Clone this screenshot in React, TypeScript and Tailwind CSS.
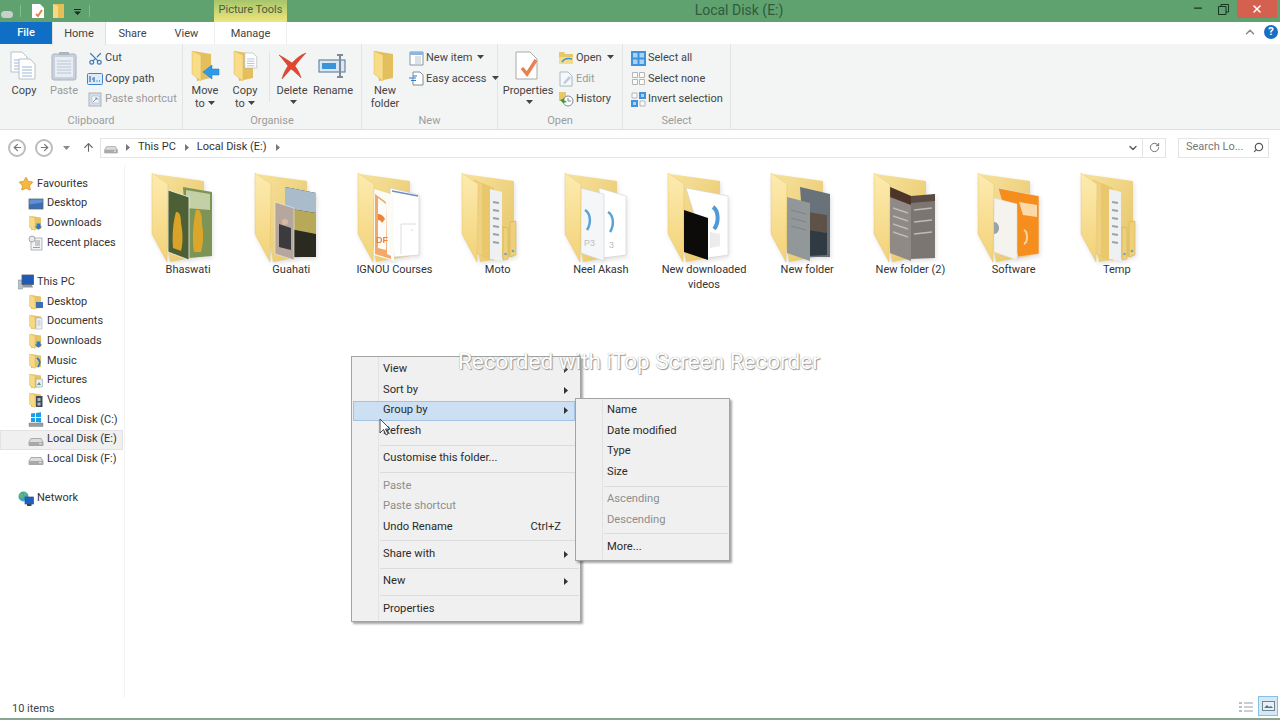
import type { ReactNode } from "react";
import { Scissors, ChevronDown, ChevronUp, RotateCw, ArrowUp, ArrowLeft, ArrowRight, Search, Minus, X, Star } from "lucide-react";

const FONT = "font-['Roboto','Noto_Sans',sans-serif]";

// small triangle next to dropdown labels
const Caret = () => (
  <svg width="7" height="4" viewBox="0 0 7 4" className="inline-block ml-[3px] mb-[2px]">
    <path d="M0 0h7L3.5 4z" fill="#444" />
  </svg>
);

const MiniFolder = ({ children }: { children?: ReactNode }) => (
  <svg width="16" height="16" viewBox="0 0 16 16" className="shrink-0">
    <path d="M3 1 L13 2.5 V14 L3 15z" fill="#e5c36a" />
    <path d="M1.5 1 L7 3 V15.5 L1.5 12.5z" fill="#f6d982" stroke="#d9b65c" strokeWidth="0.4" />
    {children}
  </svg>
);

const Drive = () => (
  <svg width="16" height="16" viewBox="0 0 16 16" className="shrink-0">
    <path d="M3 6.5h10l2 3.5v3.5H1V10z" fill="#dcdcdc" stroke="#8f8f8f" strokeWidth="0.7" />
    <path d="M1 10h14v3.5H1z" fill="#a9a9a9" />
    <rect x="11" y="11" width="2.5" height="1.2" fill="#e8e8e8" />
  </svg>
);

const WinDrive = () => (
  <svg width="16" height="16" viewBox="0 0 16 16" className="shrink-0">
    <path d="M1 11h14v3.5H1z" fill="#9d9d9d" stroke="#7d8b96" strokeWidth="0.5" />
    <path d="M3 1.6l4-.6v4H3zM8 .9l5-.7V5H8zM3 6h4v4H3zM8 6h5v4.4L8 10z" fill="#1b9ee8" />
  </svg>
);

const Monitor = () => (
  <svg width="16" height="16" viewBox="0 0 16 16" className="shrink-0">
    <rect x="1" y="3" width="14" height="10" fill="#3c6db5" stroke="#5a6672" strokeWidth="0.8" />
    <path d="M1.5 3.5h13v3l-13 2z" fill="#5d90d6" />
  </svg>
);

const RecentDoc = () => (
  <svg width="16" height="16" viewBox="0 0 16 16" className="shrink-0">
    <path d="M3 3h11v12H3z" fill="#f3f3f3" stroke="#8f9aa3" strokeWidth="0.7" />
    <path d="M7 6h5M7 8h5M7 10h5M5 12.5h7" stroke="#7f8a94" strokeWidth="0.8" />
    <circle cx="4" cy="4" r="3" fill="#e9e9e9" stroke="#7f8a94" strokeWidth="0.7" />
  </svg>
);

const ThisPcIcon = () => (
  <svg width="16" height="16" viewBox="0 0 16 16" className="shrink-0">
    <rect x="0.5" y="6" width="4" height="9" fill="#b8c2cb" stroke="#7b8791" strokeWidth="0.5" />
    <rect x="4" y="1" width="11.5" height="9.5" fill="#1e5bb8" stroke="#4c5a66" strokeWidth="0.8" />
    <path d="M5 11h9l1 2.5H5z" fill="#8c99a5" />
  </svg>
);

const NetworkIcon = () => (
  <svg width="16" height="16" viewBox="0 0 16 16" className="shrink-0">
    <circle cx="5.5" cy="5.5" r="5" fill="#3aa6c9" />
    <path d="M2 3c2-1 3 0 3 2s-2 2-3 1zM6 1.500c2 0 3 2 2 3S6 4 6 1.500z" fill="#6dbb55" />
    <rect x="7" y="6" width="8.5" height="7" fill="#1d5fc4" stroke="#47545f" strokeWidth="0.7" />
    <rect x="9" y="13" width="4.5" height="2" fill="#3a4550" />
  </svg>
);

type NavItem = { label: string; icon: ReactNode; head?: boolean; active?: boolean };

const down = <path d="M8 9h4v3h2l-4 3.500L6 12h2z" transform="translate(1 0) scale(0.95)" fill="#2a78c9" />;

const navGroups: NavItem[][] = [
  [
    { label: "Favourites", head: true, icon: <Star size={16} className="shrink-0" fill="#f5b942" stroke="#d8912c" strokeWidth={1.2} /> },
    { label: "Desktop", icon: <Monitor /> },
    { label: "Downloads", icon: <MiniFolder>{down}</MiniFolder> },
    { label: "Recent places", icon: <RecentDoc /> },
  ],
  [
    { label: "This PC", head: true, icon: <ThisPcIcon /> },
    { label: "Desktop", icon: <MiniFolder><rect x="8" y="8" width="7" height="6" fill="#3c6db5" /></MiniFolder> },
    { label: "Documents", icon: <MiniFolder><path d="M8 4h6v11H8z" fill="#eef0f2" stroke="#9aa5ad" strokeWidth="0.5" /><path d="M9.500 7h3M9.500 9h3M9.500 11h3" stroke="#98a3ab" strokeWidth="0.6" /></MiniFolder> },
    { label: "Downloads", icon: <MiniFolder>{down}</MiniFolder> },
    { label: "Music", icon: <MiniFolder><path d="M9 5c3 2 4 5 1 9" fill="none" stroke="#2a78c9" strokeWidth="1.8" /></MiniFolder> },
    { label: "Pictures", icon: <MiniFolder><rect x="8" y="6" width="6.5" height="8" fill="#e8edef" stroke="#8d979e" strokeWidth="0.5" /><path d="M9 12l2-3 2 3z" fill="#5f9a78" /></MiniFolder> },
    { label: "Videos", icon: <MiniFolder><rect x="8" y="4" width="6.5" height="11" fill="#3f4a54" /><path d="M9.500 6h3v3h-3zM9.500 10.500h3v3h-3z" fill="#a9b8c4" /></MiniFolder> },
    { label: "Local Disk (C:)", icon: <WinDrive /> },
    { label: "Local Disk (E:)", icon: <Drive />, active: true },
    { label: "Local Disk (F:)", icon: <Drive /> },
  ],
  [{ label: "Network", head: true, icon: <NetworkIcon /> }],
];

const Sidebar = () => (
  <aside className="w-[125px] shrink-0 border-r border-[#f3f3f3] pt-[9px] pb-[20px] flex flex-col gap-[19.6px] text-[#333]">
    {navGroups.map((group, i) => (
      <div key={i} className="flex flex-col">
        {group.map((item) => (
          <div
            key={item.label + item.head}
            className={
              "h-[19.7px] flex items-center gap-[3px] w-[123px] whitespace-nowrap border " +
              (item.head ? "pl-[17px] " : "pl-[27px] ") +
              (item.active ? "bg-[#f0f0f0] border-[#e2e2e2]" : "border-transparent")
            }
          >
            {item.icon}
            <span className="text-[11px]">{item.label}</span>
          </div>
        ))}
      </div>
    ))}
  </aside>
);

// ---- ribbon ----

const BigAction = ({ label, second, icon, w, disabled, caretOnly, noCaret }: { label: string; second?: string; icon: ReactNode; w: string; disabled?: boolean; caretOnly?: boolean; noCaret?: boolean }) => (
  <div className={"flex flex-col items-center pt-[5px] shrink-0 " + w + (disabled ? " text-[#9b9b9b]" : " text-[#444]")}>
    <div className="h-[33px] flex items-center justify-center">{icon}</div>
    <div className="text-[11px] leading-[13px] mt-[1.5px] whitespace-nowrap">{label}</div>
    {second && <div className="text-[11px] leading-[13px]">{second}{!noCaret && <Caret />}</div>}
    {caretOnly && <div className="leading-[12px] h-[12px]"><Caret /></div>}
  </div>
);

const SmallAction = ({ label, icon, caret, disabled }: { label: string; icon: ReactNode; caret?: boolean; disabled?: boolean }) => (
  <div className={"h-[20.5px] flex items-center gap-[2px] whitespace-nowrap text-[11px] " + (disabled ? "text-[#9b9b9b]" : "text-[#444]")}>
    <div className="w-[16px] h-[16px] flex items-center justify-center shrink-0">{icon}</div>
    <span>{label}</span>
    {caret && <Caret />}
  </div>
);

const Group = ({ label, w, className, children }: { label: string; w: string; className?: string; children: ReactNode }) => (
  <section className={"h-full flex flex-col shrink-0 border-r border-[#e3e5e5] " + w}>
    <div className={"flex-1 flex " + (className ?? "")}>{children}</div>
    <div className="h-[17px] text-center text-[11px] leading-[18px] text-[#9c9c9c]">{label}</div>
  </section>
);

const BigFolder = ({ children }: { children?: ReactNode }) => (
  <svg width="32" height="32" viewBox="0 0 32 32">
    <path d="M6 1l18 3v24L10 31z" fill="#e4bf5e" />
    <path d="M5 1l9 4v26L5 24z" fill="#f8dc87" stroke="#dcb95e" strokeWidth="0.5" />
    {children}
  </svg>
);

const Page = ({ x = 0, y = 0 }: { x?: number; y?: number }) => (
  <g transform={"translate(" + x + " " + y + ")"}>
    <path d="M0 0h11l5 5v15H0z" fill="#fff" stroke="#a9b2ba" strokeWidth="0.8" />
    <path d="M3 8h10M3 11h10M3 14h10M3 17h10" stroke="#8fb0d4" strokeWidth="0.9" />
  </g>
);

const Ribbon = () => (
  <div className="h-[86px] shrink-0 bg-[#f3f5f5] border-b border-[#e0e0e0] flex">
    <Group label="Clipboard" w="w-[183px]" className="pl-[4px]">
      <BigAction label="Copy" w="w-[40px]" icon={
        <svg width="28" height="30" viewBox="0 0 28 30"><Page x={1} y={1} /><Page x={9} y={8} /></svg>
      } />
      <BigAction label="Paste" w="w-[40px]" disabled icon={
        <svg width="26" height="30" viewBox="0 0 26 30">
          <rect x="1" y="3" width="24" height="26" rx="2" fill="#c8d2de" stroke="#a9b3bd" />
          <rect x="4" y="6" width="18" height="20" fill="#e9edf2" />
          <path d="M6 10h14M6 13h14M6 16h14M6 19h14M6 22h14" stroke="#a9bbd0" strokeWidth="0.8" />
          <rect x="8" y="1" width="10" height="3" fill="#aeb6be" />
        </svg>
      } />
      <div className="ml-[3px] pt-[4px]">
        <SmallAction label="Cut" icon={<Scissors size={15} color="#3f7fb8" className="-rotate-90" />} />
        <SmallAction label="Copy path" icon={
          <svg width="16" height="12" viewBox="0 0 16 12"><rect x="0.5" y="0.5" width="15" height="11" rx="1" fill="#dcebf9" stroke="#3d86cf" /><path d="M3 3v6M5 6h1M7 4v5M9.500 8h1M12 8h1" stroke="#24507c" strokeWidth="1" /></svg>
        } />
        <SmallAction label="Paste shortcut" disabled icon={
          <svg width="14" height="16" viewBox="0 0 14 16"><rect x="1" y="2" width="12" height="13" fill="#d9dfe6" stroke="#a9b3bd" /><rect x="4" y="5" width="7" height="7" fill="#f4f6f8" stroke="#9fb0c2" strokeWidth="0.5" /><path d="M5 11l4-4M7 7h2v2" stroke="#6f8fb0" strokeWidth="0.9" fill="none" /></svg>
        } />
      </div>
    </Group>
    <Group label="Organise" w="w-[179px]" className="pl-[1px]">
      <BigAction label="Move" second="to" w="w-[42px]" icon={
        <svg width="32" height="32" viewBox="0 0 32 32">
          <path d="M4 1l18 3v24L8 31z" fill="#e4bf5e" />
          <path d="M3 1l9 4v26L3 24z" fill="#f8dc87" stroke="#dcb95e" strokeWidth="0.5" />
          <path d="M30 19h-7v-4l-9 7 9 7v-4h7z" fill="#2f9be8" stroke="#1c74bd" strokeWidth="0.5" />
        </svg>
      } />
      <BigAction label="Copy" second="to" w="w-[38px]" icon={
        <BigFolder><g transform="scale(0.75)"><Page x={21} y={4} /></g></BigFolder>
      } />
      <div className="ml-[5px] mr-[2px] mt-[8px] w-px h-[50px] bg-[#e3e5e5]" />
      <BigAction label="Delete" w="w-[40px]" caretOnly icon={
        <svg width="30" height="28" viewBox="0 0 30 28"><path d="M2 3c6 3 10 6 13 8 4-4 8-8 14-10-4 4-8 9-11 13 3 4 5 8 6 12-3-3-7-7-10-9-3 3-6 7-9 10 1-5 4-10 6-13C8 10 5 6 2 3z" fill="#e2462f" stroke="#b93a28" strokeWidth="0.5" /></svg>
      } />
      <BigAction label="Rename" w="w-[42px]" icon={
        <svg width="30" height="26" viewBox="0 0 30 26"><rect x="1" y="7" width="26" height="12" fill="#dbe8f3" stroke="#50738f" /><rect x="4" y="10" width="14" height="6" fill="#3d93d8" /><path d="M19 2h6M22 2v22M19 24h6" stroke="#7d8b96" strokeWidth="2" /></svg>
      } />
    </Group>
    <Group label="New" w="w-[136px]" className="pl-[3px]">
      <BigAction label="New" second="folder" noCaret w="w-[40px]" icon={<BigFolder />} />
      <div className="ml-[3px] pt-[4px]">
        <SmallAction label="New item" caret icon={
          <svg width="15" height="15" viewBox="0 0 15 15"><path d="M1 1h13v13H1z" fill="#fff" stroke="#8196a8" /><path d="M1 1h13v3H1z" fill="#8fb6da" /><path d="M6 6h6M6 8h6M6 10h6M6 12h6" stroke="#9aa9b5" strokeWidth="0.7" /></svg>
        } />
        <SmallAction label="Easy access" caret icon={
          <svg width="15" height="15" viewBox="0 0 15 15"><path d="M4 1h7l3 3v10H4z" fill="#fff" stroke="#7f8f9c" /><path d="M0 7h7M2 9.500h5M4 5h4" stroke="#2f7cc4" strokeWidth="1" /></svg>
        } />
      </div>
    </Group>
    <Group label="Open" w="w-[125px]" className="pl-[2px]">
      <BigAction label="Properties" w="w-[56px]" caretOnly icon={
        <svg width="26" height="30" viewBox="0 0 26 30"><path d="M1 1h14l7 7v20H1z" fill="#fff" stroke="#a9a9a9" /><path d="M7 17l5 6 9-14" fill="none" stroke="#e8814f" strokeWidth="3.5" /></svg>
      } />
      <div className="ml-[2px] pt-[4px]">
        <SmallAction label="Open" caret icon={
          <svg width="16" height="14" viewBox="0 0 16 14"><path d="M1 1h5l1 2h8v10H1z" fill="#e9c767" /><path d="M1 6h14v7H1z" fill="#f6dc89" /><path d="M4 11c2-3 6-4 10-3" stroke="#3b94d6" strokeWidth="1.6" fill="none" /></svg>
        } />
        <SmallAction label="Edit" disabled icon={
          <svg width="14" height="16" viewBox="0 0 14 16"><path d="M1 1h8l4 4v10H1z" fill="#f6f8fa" stroke="#a9b8c6" /><path d="M4 12l6-7 2 2-6 6z" fill="#b8cde0" /></svg>
        } />
        <SmallAction label="History" icon={
          <svg width="16" height="16" viewBox="0 0 16 16"><path d="M1 1h7v9H1z" fill="#eac768" /><circle cx="10" cy="10" r="5" fill="#fff" stroke="#7d8b96" /><path d="M10 7v3h3" stroke="#7d8b96" fill="none" /><path d="M2 9l3 3 4-1-3-2 1-2z" fill="#3f9a3f" /></svg>
        } />
      </div>
    </Group>
    <Group label="Select" w="w-[108px]" className="pl-[7px]">
      <div className="pt-[4px]">
        <SmallAction label="Select all" icon={
          <svg width="15" height="15" viewBox="0 0 15 15"><path d="M0 0h15v15H0z" fill="#3f93de" /><path d="M2 2h4.500v4.500H2zM8.500 2H13v4.500H8.500zM2 8.500h4.500V13H2zM8.500 8.500H13V13H8.500z" fill="#a9d2f3" /></svg>
        } />
        <SmallAction label="Select none" icon={
          <svg width="15" height="15" viewBox="0 0 15 15"><path d="M1.500 1.500h5v5h-5zM8.500 1.500h5v5h-5zM1.500 8.500h5v5h-5zM8.500 8.500h5v5h-5z" fill="#fafafa" stroke="#b5b5b5" /></svg>
        } />
        <SmallAction label="Invert selection" icon={
          <svg width="15" height="15" viewBox="0 0 15 15"><path d="M8 0h7v7H8zM0 8h7v7H0z" fill="#3f93de" /><path d="M10 2h3v3h-3zM2 10h3v3H2z" fill="#a9d2f3" /><path d="M1 1h5v5H1zM9 9h5v5H9z" fill="#fafafa" stroke="#b5b5b5" /></svg>
        } />
      </div>
    </Group>
  </div>
);

// ---- folders ----

const Folder = ({ children }: { children?: ReactNode }) => (
  <svg width="76" height="92" viewBox="0 0 76 92" className="block drop-shadow-[1px_2px_2px_rgba(0,0,0,0.12)]">
    <defs>
      <linearGradient id="folderFront" x1="0" y1="0" x2="0" y2="1">
        <stop offset="0" stopColor="#fcebb0" />
        <stop offset="1" stopColor="#f3d277" />
      </linearGradient>
      <linearGradient id="folderBack" x1="0" y1="0" x2="1" y2="1">
        <stop offset="0" stopColor="#f7e29c" />
        <stop offset="1" stopColor="#e6c467" />
      </linearGradient>
    </defs>
    <polygon points="4,2 54,9 54,84 20,90" fill="url(#folderBack)" />
    {children}
    <polygon points="2,1 18,12 17,90 2,62" fill="url(#folderFront)" stroke="#e3bf62" strokeWidth="0.4" />
  </svg>
);

const Docs = () => (
  <>
    <polygon points="14,8 30,15 30,88 14,80" fill="#f0d182" stroke="#d9b65c" strokeWidth="0.4" />
    <polygon points="22,11 34,16 34,89 22,85" fill="#e9c76c" />
    <polygon points="30,17 42,20 42,89 30,87" fill="#eef0f1" />
    <path d="M33 30l6 1M33 38l6 1M33 46l6 1M33 54l6 1M33 62l6 1M33 70l6 1" stroke="#9aa3ab" strokeWidth="2" />
    <polygon points="43,55 48,56 48,87 43,88" fill="#efd07a" stroke="#c9a850" strokeWidth="0.5" />
    <polygon points="50,50 56,49 56,83 50,85" fill="#efd07a" stroke="#c9a850" strokeWidth="0.5" />
    <circle cx="45.5" cy="82" r="1.3" fill="#6aa5c6" />
    <circle cx="53" cy="79" r="1.3" fill="#6aa5c6" />
  </>
);

const folders: { name: string; art: ReactNode }[] = [
  {
    name: "Bhaswati",
    art: (
      <>
        <polygon points="33,15 62,20 62,84 38,86" fill="#7c9456" />
        <path d="M36 18l24 4v16l-24-2z" fill="#c3d0a6" />
        <path d="M46 38c5-2 6 6 6 14 2 10 1 22-1 28h-7c-2-12-1-30 2-42z" fill="#dca62a" />
        <polygon points="18,18 39,25 39,88 18,80" fill="#4d5f35" stroke="#f3f3f3" strokeWidth="0.8" />
        <path d="M26 40c4-1 5 5 5 11 2 10 2 20 0 28l-8-3c-1-12 0-26 3-36z" fill="#d9a32a" />
      </>
    ),
  },
  {
    name: "Guahati",
    art: (
      <>
        <polygon points="32,15 63,21 63,85 38,85" fill="#2a2a20" />
        <polygon points="32,15 63,21 63,41 32,36" fill="#a8bccc" />
        <polygon points="32,36 63,41 63,62 32,56" fill="#b8a85a" />
        <polygon points="22,30 41,36 41,88 22,82" fill="#b5a79e" stroke="#eee" strokeWidth="0.6" />
        <path d="M26 52l12 4v22l-12-3z" fill="#3b3a3e" />
        <circle cx="32" cy="50" r="3" fill="#d8b8a0" />
      </>
    ),
  },
  {
    name: "IGNOU Courses",
    art: (
      <>
        <polygon points="34,16 63,23 63,83 38,85" fill="#fff" stroke="#cfcfcf" strokeWidth="0.6" />
        <path d="M36 19l26 5" stroke="#6b8fc6" strokeWidth="1.5" />
        <path d="M45 52h15M45 52v30M55 58l2 0" stroke="#c8c8c8" strokeWidth="0.6" />
        <polygon points="18,17 38,23 38,89 18,83" fill="#fbfbf8" />
        <path d="M19 22l11 8 1 52 4 2v3l-16-5z" fill="#f2a868" />
        <path d="M22 26l8 6v46l-8-2z" fill="#fbfbf8" />
        <path d="M22 42c3 0 6 2 7 5l-3 4c-1-2-2-3-4-3z" fill="#e9843a" />
        <text x="20" y="71" fontSize="9" fontWeight="700" fill="#e9843a" fontFamily="Liberation Sans, sans-serif">DF</text>
      </>
    ),
  },
  { name: "Moto", art: <Docs /> },
  {
    name: "Neel Akash",
    art: (
      <>
        <polygon points="36,16 63,24 63,83 40,86" fill="#fff" stroke="#d0d0d0" strokeWidth="0.6" />
        <path d="M45 40c5 3 7 12 2 20" fill="none" stroke="#5ba3d6" strokeWidth="2.5" />
        <text x="46" y="76" fontSize="9" fill="#bbb" fontFamily="Liberation Sans, sans-serif">3</text>
        <polygon points="18,16 41,22 41,89 18,81" fill="#f5f6f7" stroke="#d0d0d0" strokeWidth="0.6" />
        <path d="M22 38c5 3 7 12 2 20" fill="none" stroke="#5ba3d6" strokeWidth="2.5" />
        <text x="21" y="74" fontSize="9" fill="#bbb" fontFamily="Liberation Sans, sans-serif">P3</text>
      </>
    ),
  },
  {
    name: "New downloaded videos",
    art: (
      <>
        <polygon points="20,16 62,24 62,83 42,86" fill="#fff" stroke="#d0d0d0" strokeWidth="0.6" />
        <path d="M47 35c6 4 6 16 1 22" fill="none" stroke="#4f9ad6" strokeWidth="4" />
        <path d="M44 60l10 2v12l-10 2z" fill="#ececec" />
        <polygon points="18,38 42,46 42,88 18,80" fill="#0d0b09" />
      </>
    ),
  },
  {
    name: "New folder",
    art: (
      <>
        <polygon points="31,15 61,22 61,85 36,85" fill="#69727a" />
        <path d="M38 40l20 3v18l-20-2z" fill="#5d5148" />
        <path d="M38 58l20 3v22l-20 1z" fill="#2f3a42" />
        <polygon points="18,25 41,31 41,89 18,81" fill="#92979a" />
        <path d="M22 38l15 4M22 46l15 4M22 54l15 4" stroke="#7c8285" strokeWidth="1" />
      </>
    ),
  },
  {
    name: "New folder (2)",
    art: (
      <>
        <polygon points="37,30 63,22 63,86 38,87" fill="#7c7672" />
        <polygon points="18,15 39,24 39,89 18,81" fill="#8f8a86" />
        <polygon points="18,15 39,24 39,33 18,25" fill="#4d3428" />
        <polygon points="39,24 63,22 63,29 39,31" fill="#5b4a42" />
        <path d="M21 36l15 5M21 44l15 5M21 52l15 5M21 60l15 5M42 38l18-2M42 50l18-2M42 62l18-2" stroke="#bfbab4" strokeWidth="1.4" />
      </>
    ),
  },
  {
    name: "Software",
    art: (
      <>
        <polygon points="22,16 63,24 63,82 42,85" fill="#f68e1e" stroke="#e9e9e9" strokeWidth="0.6" />
        <path d="M43 30l18 3 0 12-14-2z" fill="#fbd9a8" />
        <path d="M48 58c4 2 4 12 0 14" fill="none" stroke="#f6d3a0" strokeWidth="2" />
        <polygon points="18,26 41,32 41,88 18,80" fill="#f4f3ee" stroke="#d8d8d8" strokeWidth="0.5" />
        <path d="M18 50c3 0 5 3 5 6s-2 6-5 6z" fill="#9aa3a6" />
      </>
    ),
  },
  { name: "Temp", art: <Docs /> },
];

// ---- context menu ----

type MenuRow = { label?: string; arrow?: boolean; disabled?: boolean; hot?: boolean; shortcut?: string; sep?: boolean };

const mainMenu: MenuRow[] = [
  { label: "View", arrow: true },
  { label: "Sort by", arrow: true },
  { label: "Group by", arrow: true, hot: true },
  { label: "Refresh" },
  { sep: true },
  { label: "Customise this folder..." },
  { sep: true },
  { label: "Paste", disabled: true },
  { label: "Paste shortcut", disabled: true },
  { label: "Undo Rename", shortcut: "Ctrl+Z" },
  { sep: true },
  { label: "Share with", arrow: true },
  { sep: true },
  { label: "New", arrow: true },
  { sep: true },
  { label: "Properties" },
];

const subMenu: MenuRow[] = [
  { label: "Name" },
  { label: "Date modified" },
  { label: "Type" },
  { label: "Size" },
  { sep: true },
  { label: "Ascending", disabled: true },
  { label: "Descending", disabled: true },
  { sep: true },
  { label: "More..." },
];

const Menu = ({ rows, className }: { rows: MenuRow[]; className: string }) => (
  <div className={"absolute bg-[#f0f0f0] border border-[#a3a3a3] shadow-[2px_2px_2px_rgba(0,0,0,0.35)] px-[1px] text-[11.2px] " + className}>
    <div className="absolute top-0 bottom-0 left-[26px] w-px bg-[#e2e2e2]" />
    {rows.map((row, i) =>
      row.sep ? (
        <div key={i} className="h-[6.7px] flex items-center">
          <div className="h-px bg-[#dcdcdc] w-full ml-[27px]" />
        </div>
      ) : (
        <div
          key={i}
          className={
            "relative h-[20.6px] flex items-center justify-between border whitespace-nowrap " +
            (row.hot ? "bg-[#cde0f3] border-[#a4c3e2] w-[222px] " : "border-transparent ") +
            (row.disabled ? "text-[#8e8e8e]" : "text-[#2b2b2b]")
          }
        >
          <span className="pl-[29px]">{row.label}</span>
          {row.shortcut && <span className="pr-[17px]">{row.shortcut}</span>}
          {row.arrow && (
            <svg width="4" height="7" viewBox="0 0 4 7" className={row.hot ? "mr-[6px]" : "mr-[10px]"}>
              <path d="M0 0l4 3.500L0 7z" fill="#333" />
            </svg>
          )}
        </div>
      )
    )}
  </div>
);

export default function App() {
  return (
    <div className={"relative w-[1280px] h-[720px] overflow-hidden bg-white flex flex-col text-[#333] " + FONT}>
      {/* title bar */}
      <header className="h-[22px] shrink-0 bg-[#5fa270] flex items-stretch relative">
        <div className="w-[214px] flex items-center shrink-0">
          <div className="ml-[1px] w-[12px] h-[7px] mt-[6px] rounded-sm bg-[#c9cfcb]" />
          <div className="ml-[7px] w-px h-[12px] bg-[#86b893]" />
          <svg width="14" height="15" viewBox="0 0 14 15" className="ml-[10px]"><path d="M1 0h8l4 4v10H1z" fill="#fff" /><path d="M5 10l2 2 4-6" stroke="#e8814f" strokeWidth="2" fill="none" /></svg>
          <svg width="13" height="14" viewBox="0 0 13 14" className="ml-[7px]"><path d="M1 0h11v14H1z" fill="#e5bf58" /><path d="M1 0l5 2v12H1z" fill="#f6d982" /></svg>
          <svg width="7" height="6" viewBox="0 0 7 6" className="ml-[9px] mt-[2px]"><path d="M0 0h7v1H0zM0 2.500h7L3.500 6z" fill="#1b2b20" /></svg>
          <div className="ml-[8px] w-px h-[12px] bg-[#86b893]" />
        </div>
        <div className="w-[73px] shrink-0 bg-gradient-to-b from-[#a6c56c] to-[#eee77c] text-center text-[11px] leading-[19px] text-[#4f5a45]">Picture Tools</div>
        <div className="flex-1 text-center pr-[89px] text-[14px] leading-[21px] text-[#2f5b3c] whitespace-nowrap">Local Disk (E:)</div>
        <div className="absolute right-[3px] top-0 h-[18px] w-[40px] bg-[#d4604f] flex items-center justify-center">
          <X size={12} color="#fff" strokeWidth={3} />
        </div>
        <div className="absolute left-[1192px] top-[2px]"><Minus size={12} color="#16351f" strokeWidth={2.5} /></div>
        <svg width="11" height="11" viewBox="0 0 11 11" className="absolute left-[1218px] top-[4px]">
          <path d="M3 2.500V.5h7.500V8H8M.5 2.500H8V10.500H.5z" fill="none" stroke="#16351f" />
        </svg>
      </header>

      {/* tab strip */}
      <nav className="h-[22px] shrink-0 bg-white flex text-[11px] text-[#444] relative">
        <div className="w-[52px] bg-[#0f6fc6] text-white text-center leading-[22px] font-medium">File</div>
        <div className="w-[54px] h-[23px] border-x border-[#e0e0e0] bg-[#f3f5f5] text-center leading-[23px] z-10">Home</div>
        <div className="w-[53px] text-center leading-[23px]">Share</div>
        <div className="w-[55px] text-center leading-[23px]">View</div>
        <div className="w-[73px] border-x border-[#eeeeee] text-center leading-[23px]">Manage</div>
        <ChevronUp size={14} color="#8a8a8a" strokeWidth={2.5} className="absolute left-[1243px] top-[3px]" />
        <div className="absolute left-[1264px] top-[3px] w-[14px] h-[14px] rounded-full bg-[#1a6fc4] text-white text-[11px] font-bold leading-[14px] text-center">?</div>
      </nav>

      <Ribbon />

      {/* address row */}
      <div className="h-[35px] shrink-0 flex items-center text-[11px] text-[#333] relative">
        <div className="w-[18px] h-[18px] ml-[8px] rounded-full border-2 border-[#bdbdbd] flex items-center justify-center"><ArrowLeft size={11} color="#777" strokeWidth={2.5} /></div>
        <div className="w-[18px] h-[18px] ml-[9px] rounded-full border-2 border-[#bdbdbd] flex items-center justify-center"><ArrowRight size={11} color="#777" strokeWidth={2.5} /></div>
        <svg width="7" height="4" viewBox="0 0 7 4" className="ml-[10px]"><path d="M0 0h7L3.500 4z" fill="#8a8a8a" /></svg>
        <ArrowUp size={13} color="#666" strokeWidth={2} className="ml-[12px]" />
        <div className="ml-[5px] h-[20px] w-[1066px] border border-[#e4e4e4] flex items-center">
          <div className="ml-[2px] scale-90"><Drive /></div>
          <svg width="4" height="7" viewBox="0 0 4 7" className="ml-[7px]"><path d="M0 0l4 3.500L0 7z" fill="#777" /></svg>
          <span className="ml-[8px]">This PC</span>
          <svg width="4" height="7" viewBox="0 0 4 7" className="ml-[9px]"><path d="M0 0l4 3.500L0 7z" fill="#777" /></svg>
          <span className="ml-[8px]">Local Disk (E:)</span>
          <svg width="4" height="7" viewBox="0 0 4 7" className="ml-[9px]"><path d="M0 0l4 3.500L0 7z" fill="#777" /></svg>
          <ChevronDown size={12} color="#555" strokeWidth={2.5} className="ml-auto mr-[3px]" />
          <div className="w-[23px] h-full border-l border-[#e4e4e4] flex items-center justify-center"><RotateCw size={11} color="#666" strokeWidth={2} /></div>
        </div>
        <div className="ml-[12px] h-[20px] w-[91px] border border-[#e4e4e4] flex items-center pl-[7px] text-[#777]">
          <span>Search Lo...</span>
          <Search size={11} color="#555" strokeWidth={2.5} className="ml-auto mr-[4px] -scale-x-100" />
        </div>
      </div>

      {/* main */}
      <main className="flex-1 flex min-h-0">
        <Sidebar />
        <div className="flex-1 pl-[11.5px] pt-[7px]">
          <div className="grid grid-cols-[repeat(10,103.2px)]">
            {folders.map((f) => (
              <div key={f.name} className="flex flex-col items-center">
                <Folder>{f.art}</Folder>
                <div className="text-[11px] leading-[15px] text-center text-[#333] w-[90px] -mt-[2px]">{f.name}</div>
              </div>
            ))}
          </div>
        </div>
      </main>

      {/* status bar */}
      <footer className="h-[20px] shrink-0 flex items-center pl-[12px] pt-[2px] text-[11px] text-[#444] relative">
        10 items
        <svg width="16" height="12" viewBox="0 0 16 12" className="absolute left-[1238px] top-[3px]">
          <path d="M1 1h3v2H1zM1 5h3v2H1zM1 9h3v2H1z" fill="#b7c0c7" />
          <path d="M6 2h9M6 6h9M6 10h9" stroke="#b7c0c7" strokeWidth="1.5" />
        </svg>
        <div className="absolute left-[1258px] -top-[2px] w-[20px] h-[20px] bg-[#d4e8f7] border border-[#88bfe6] flex items-center justify-center">
          <svg width="13" height="10" viewBox="0 0 13 10"><rect x="0.5" y="0.5" width="12" height="9" fill="#e8f0f5" stroke="#6f8391" /><path d="M2 7l3-3 2 2 2-1 2 2z" fill="#54768c" /></svg>
        </div>
      </footer>
      <div className="h-[2px] shrink-0 bg-[#8aa592]" />

      {/* right click menu */}
      <Menu rows={mainMenu} className="left-[351px] top-[356px] w-[230px] h-[266px] pt-[2.4px]" />
      <Menu rows={subMenu} className="left-[575px] top-[398px] w-[155px] h-[163px] pt-[1.4px]" />

      {/* recorder watermark */}
      <div className="absolute left-[458px] top-[347px] text-[22.5px] leading-[28px] text-white whitespace-nowrap font-['Roboto',sans-serif] [text-shadow:0_0_1px_#888,1px_1px_1px_#999]">
        Recorded with iTop Screen Recorder
      </div>

      {/* mouse pointer */}
      <svg width="12" height="18" viewBox="0 0 12 18" className="absolute left-[379px] top-[418px]">
        <path d="M1 1v14l3.500-3.500L7 17l2-1-2.500-5H11z" fill="#fff" stroke="#222" strokeWidth="0.8" />
      </svg>
    </div>
  );
}
